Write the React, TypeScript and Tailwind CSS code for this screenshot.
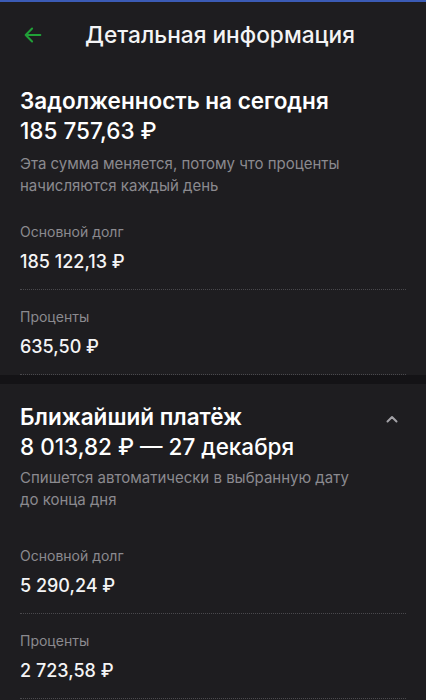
import React from 'react';

function Row({ label, value }: { label: string; value: string }) {
  return (
    <div className="pt-[18px]">
      <div className="text-[14px] leading-[18px] text-[#8b8a8f]">{label}</div>
      <div className="mt-[10px] text-[18px] font-medium leading-[22px] text-[#f4f4f5]">{value}</div>
      <div className="mt-[16px] border-b border-dotted border-[#4a494d]" />
    </div>
  );
}

export default function App() {
  return (
    <div
      className="h-[700px] w-[426px] overflow-hidden bg-[#1e1d20] text-white"
      style={{ fontFamily: 'Inter, "Noto Sans", sans-serif' }}
    >
      <div className="h-[2px] bg-[#3b5bb5]" />
      <div className="flex h-[66px] items-center px-[22px]">
        <svg width="22" height="22" viewBox="0 0 24 24" fill="none" stroke="#21a038" strokeWidth="2.2" strokeLinecap="round" strokeLinejoin="round">
          <path d="M20 12H4M11 5l-7 7 7 7" />
        </svg>
        <div className="ml-[41px] text-[22.7px] font-medium leading-none text-[#f4f4f5]">Детальная информация</div>
      </div>

      <section className="px-5">
        <h2 className="mt-[18px] text-[22.5px] font-semibold leading-[30px]">Задолженность на сегодня</h2>
        <div className="text-[22.5px] font-medium leading-[30px]">185 757,63 ₽</div>
        <p className="mt-[7px] text-[15px] leading-[22px] text-[#8b8a8f]">
          Эта сумма меняется, потому что проценты
          <br />
          начисляются каждый день
        </p>
        <div className="pt-[8px]">
          <Row label="Основной долг" value="185 122,13 ₽" />
          <Row label="Проценты" value="635,50 ₽" />
        </div>
      </section>

      <div className="h-[9px] bg-[#141316]" />

      <section className="px-5">
        <div className="mt-[18px] flex items-start justify-between">
          <div>
            <h2 className="text-[22.5px] font-semibold leading-[30px]">Ближайший платёж</h2>
            <div className="text-[22.5px] font-medium leading-[30px]">8 013,82 ₽ — 27 декабря</div>
          </div>
          <svg className="mr-[7px] mt-[12px]" width="14" height="10" viewBox="0 0 14 10" fill="none" stroke="#a3a2a7" strokeWidth="2" strokeLinecap="round" strokeLinejoin="round">
            <path d="M2.5 7.5l4.5-4.5 4.5 4.5" />
          </svg>
        </div>
        <p className="mt-[5px] text-[15px] leading-[22px] text-[#8b8a8f]">
          Спишется автоматически в выбранную дату
          <br />
          до конца дня
        </p>
        <div className="pt-[18px]">
          <Row label="Основной долг" value="5 290,24 ₽" />
          <Row label="Проценты" value="2 723,58 ₽" />
        </div>
      </section>
    </div>
  );
}
